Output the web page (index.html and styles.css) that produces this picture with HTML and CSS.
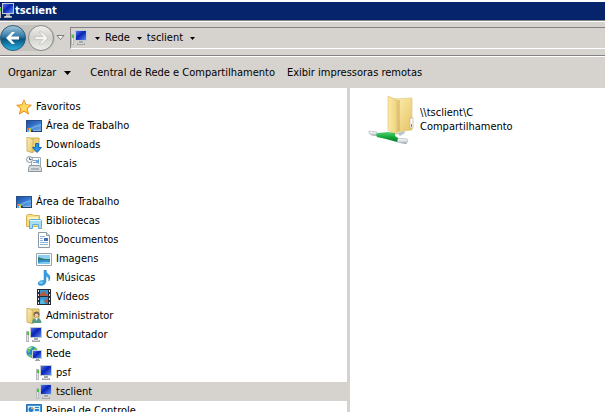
FILE: index.html
```html
<!DOCTYPE html>
<html lang="pt-BR">
<head>
<meta charset="utf-8">
<title>tsclient</title>
<link rel="stylesheet" href="styles.css">
</head>
<body>
<svg class="defs" aria-hidden="true">
  <defs>
    <linearGradient id="screen" x1="0" y1="0" x2="1" y2="1">
      <stop offset="0" stop-color="#4a78f0"/><stop offset=".45" stop-color="#0a22b4"/><stop offset="1" stop-color="#5a8af4"/>
    </linearGradient>
    <linearGradient id="desk" x1="0" y1="0" x2="1" y2="1">
      <stop offset="0" stop-color="#1d4f9f"/><stop offset=".5" stop-color="#3576cc"/><stop offset="1" stop-color="#6aa8ea"/>
    </linearGradient>
    <linearGradient id="gold" x1="0" y1="0" x2="1" y2="1">
      <stop offset="0" stop-color="#fdf0b4"/><stop offset="1" stop-color="#e6c465"/>
    </linearGradient>
    <linearGradient id="fold" x1="0" y1="0" x2="1" y2="0">
      <stop offset="0" stop-color="#fbe9a4"/><stop offset="1" stop-color="#efd27f"/>
    </linearGradient>
    <linearGradient id="back" x1="0" y1="0" x2="0" y2="1">
      <stop offset="0" stop-color="#a9c8dc"/><stop offset=".45" stop-color="#2f78a8"/><stop offset=".55" stop-color="#08547f"/><stop offset="1" stop-color="#2ab4e4"/>
    </linearGradient>
    <linearGradient id="next" x1="0" y1="0" x2="0" y2="1">
      <stop offset="0" stop-color="#f0f0ee"/><stop offset=".5" stop-color="#d2d1cd"/><stop offset="1" stop-color="#efefed"/>
    </linearGradient>
    <linearGradient id="pipe" x1="0" y1="0" x2="0" y2="1">
      <stop offset="0" stop-color="#f6f8f9"/><stop offset=".5" stop-color="#dfe5e9"/><stop offset="1" stop-color="#8b979f"/>
    </linearGradient>
    <linearGradient id="green" x1="0" y1="0" x2="0" y2="1">
      <stop offset="0" stop-color="#58d070"/><stop offset=".5" stop-color="#14a93c"/><stop offset="1" stop-color="#067a22"/>
    </linearGradient>
    <symbol id="pc" viewBox="0 0 16 16">
      <path d="M0 4h3v11H0z" fill="#b6babd"/><path d="M1 5h1v9H1z" fill="#e6e8e8"/><path d="M1 5h2v3H1z" fill="#42cc32"/>
      <path d="M4 0h12v11H4z" fill="#c5c9d0"/><path d="M5 1h10v9H5z" fill="url(#screen)"/>
      <path d="M8 11h4v2h2v2H6v-2h2z" fill="#a3a7ac"/><path d="M7 13h6v1H7z" fill="#d9dcdf"/>
    </symbol>
    <symbol id="desktop" viewBox="0 0 16 16">
      <path d="M0 2h16v12H0z" fill="#2a4f86"/><path d="M1 3h14v9H1z" fill="url(#desk)"/>
      <path d="M1 12Q8 7 15 6v2Q9 9 5 12z" fill="#86baf0" opacity=".6"/><path d="M0 12h16v2H0z" fill="#1c4478"/><path d="M7 12h8v1H7z" fill="#8fb0d8"/>
      <path d="M1 10h2v2H1z" fill="#e8703c"/><path d="M3 10h2v2H3z" fill="#88d050"/><path d="M1 12h2v2H1z" fill="#59b4f4"/><path d="M3 12h2v2H3z" fill="#f6d64a"/>
    </symbol>
    <symbol id="star" viewBox="0 0 16 16">
      <path d="M8 .8l2 5 5.3.4-4.1 3.5 1.3 5.4L8 12.2l-4.6 2.9 1.3-5.4L.7 6.2 6 5.8z" fill="#ffc62e" stroke="#e9962c"/>
      <path d="M8 2l1.500 4 4 .3-3.500 3 1 3L8 11l-3 1.500 1-3L3 7l3.500-.5z" fill="#ffdb66"/>
    </symbol>
    <symbol id="openfolder" viewBox="0 0 16 16">
      <path d="M5 1h8v13H5z" fill="#ecd27c" stroke="#cfae55"/><path d="M1 0l6 2v14l-6-2z" fill="url(#gold)" stroke="#d1b35c"/>
    </symbol>
    <symbol id="downloads" viewBox="0 0 16 16">
      <use href="#openfolder"/><path d="M9.500 6.500h3v4h3L11 15.500 6.500 10.500h3z" fill="#2b96e6" stroke="#136bb6"/>
    </symbol>
    <symbol id="admin" viewBox="0 0 16 16">
      <use href="#openfolder"/><circle cx="10.500" cy="6.500" r="3" fill="#7b624a"/><circle cx="10.500" cy="7.500" r="2" fill="#e8c6a1"/><path d="M6 15q0-5 4.500-5t5 5z" fill="#559a86"/><path d="M9 10h3l-1.500 3z" fill="#e8f0ec"/>
    </symbol>
    <symbol id="places" viewBox="0 0 16 16">
      <path d="M5.500 1.500h9v9h-9z" fill="#f7f9fa" stroke="#a1aab1"/><path d="M7 4h3v1H7zM7 6h3v1H7zM12 3h1v5h-1z" fill="#8ba7bd"/><path d="M10 4h3v3h-3z" fill="#62a7de"/>
      <path d="M3.500 9.500h10l2 3v3h-13v-3z" fill="#d7dcdf" stroke="#8c969d"/><path d="M5 12h8v2H5z" fill="#a9b2b8"/>
      <circle cx="3.500" cy="3.500" r="3" fill="#eef3f5" stroke="#8f9aa3"/><path d="M3.500 1.500v2h2" fill="none" stroke="#4c6a84"/>
    </symbol>
    <symbol id="library" viewBox="0 0 16 16">
      <path d="M.5 2.500l1-1h5l1 1h6v11H.5z" fill="#f4dd88" stroke="#d5b252"/><path d="M2 4h10v2H2z" fill="#fff3bb"/>
      <path d="M3.500 15.500v-8l1-1h10l1 1v8h-3v-4h-6v4z" fill="#a8dcf3" stroke="#5aaedb"/><path d="M4 7h11v1H4z" fill="#e2f6fd"/>
    </symbol>
    <symbol id="doc" viewBox="0 0 16 16">
      <path d="M2.500.5h8l3 3v12h-11z" fill="#fff" stroke="#8b98a8"/><path d="M10.500.5v3h3" fill="#d7e1ec" stroke="#8b98a8"/>
      <path d="M4 4h5v1H4zM4 6h3v1H4zM4 8h3v1H4zM4 10h8v1H4zM4 12h8v1H4z" fill="#8eb2da"/><path d="M8 6h4v3H8z" fill="#3c70be"/>
    </symbol>
    <symbol id="image" viewBox="0 0 16 16">
      <path d="M.5 2.500h15v12H.5z" fill="#fff" stroke="#98a3ab"/><path d="M2 4h12v9H2z" fill="#8cd0f5"/><path d="M2 6l3 1 4 1h5v2H2z" fill="#35766f"/><path d="M2 9h12v4H2z" fill="#2b8fca"/><path d="M2 12q5-2 12-1v2H2z" fill="#80c9e8"/>
    </symbol>
    <symbol id="music" viewBox="0 0 16 16">
      <path d="M8 0h2q0 3 3 5 2 2 0 6 .5-4-3-5v6q-1 3.500-5 3.500-3 0-3-2.500 1-3 6-2.500z" fill="#3a9fe2" stroke="#2280c4" stroke-width=".5"/><ellipse cx="5" cy="12.500" rx="2" ry="1" fill="#8ed0f6"/>
    </symbol>
    <symbol id="video" viewBox="0 0 16 16">
      <path d="M1 0h14v16H1z" fill="#252c34"/><path d="M4 1h8v6H4zM4 8h8v7H4z" fill="#3b93cf"/><path d="M4 5l4-3 4 5H4zM8 12l4-3v6z" fill="#b75a45"/><path d="M4 12l3-2 2 5H4z" fill="#53b9e5"/>
      <path d="M2 1h1v2H2zM2 5h1v2H2zM2 9h1v2H2zM2 13h1v2H2zM13 1h1v2h-1zM13 5h1v2h-1zM13 9h1v2h-1zM13 13h1v2h-1z" fill="#e7eaed"/>
    </symbol>
    <symbol id="net" viewBox="0 0 16 16">
      <circle cx="6" cy="6" r="5.700" fill="#2a85d5"/><path d="M1 4q2-4 6-3.500L6 3 4 4v2L2 7zM7 3l3-1.500L11.500 4H8zM3 8l3 1v3Q3 11 2 9z" fill="#65c652"/><path d="M2 3q2-2 4-2L4 3z" fill="#d2f1e9"/>
      <path d="M6 4h10v9H6z" fill="#c8cdd4"/><path d="M7 5h8v7H7z" fill="url(#screen)"/><path d="M10 13h3v1h1v1H9v-1h1z" fill="#9da3aa"/>
    </symbol>
    <symbol id="panel" viewBox="0 0 16 16">
      <path d="M.5 1.500h15v12H.5z" fill="#429bdf" stroke="#2b6eac"/><path d="M2 3h12v9H2z" fill="#d3edfd"/><circle cx="5" cy="6.500" r="2.500" fill="#267dcb"/><path d="M5 6V4q2 0 2.500 2z" fill="#f5a037"/><path d="M9 4h4v1H9zM9 6h4v2H9zM3 10h10v1H3z" fill="#3883bd"/>
    </symbol>
  </defs>
</svg>
<div class="window">
  <header class="titlebar"><svg class="icon" viewBox="2 0 14 16"><use href="#pc" width="16" height="16"/></svg><h1>tsclient</h1></header>
  <nav class="navbar" aria-label="Navegação">
    <div class="travel">
      <button class="round" aria-label="Voltar"><svg viewBox="0 0 26 26"><circle cx="13" cy="13" r="12.500" fill="url(#back)" stroke="#315d78"/><path d="M6 13l6-6h3l-4 4.500h8v3h-8l4 4.500h-3z" fill="#fff"/></svg></button>
      <button class="round" aria-label="Avançar"><svg viewBox="0 0 26 26"><circle cx="13" cy="13" r="12.500" fill="url(#next)" stroke="#898986"/><path d="M20 13l-6-6h-3l4 4.500H7v3h8l-4 4.500h3z" fill="#f5f5f3" stroke="#b9b8b4" stroke-width=".6"/></svg></button>
    </div>
    <button class="recent" aria-label="Páginas recentes"><svg viewBox="0 0 9 6"><path d="M1 .5h7L4.500 4.500z" fill="#fff" stroke="#77797d"/></svg></button>
    <div class="address">
      <svg class="icon"><use href="#pc"/></svg>
      <button class="crumb arrow" aria-label="Locais"><svg viewBox="0 0 5 3"><path d="M0 0h5L2.500 3z"/></svg></button>
      <button class="crumb">Rede <svg viewBox="0 0 5 3"><path d="M0 0h5L2.500 3z"/></svg></button>
      <button class="crumb">tsclient <svg viewBox="0 0 5 3"><path d="M0 0h5L2.500 3z"/></svg></button>
    </div>
  </nav>
  <div class="toolbar">
    <button class="menu">Organizar <svg viewBox="0 0 7 4"><path d="M0 0h7L3.500 4z"/></svg></button>
    <button>Central de Rede e Compartilhamento</button>
    <button>Exibir impressoras remotas</button>
  </div>
  <main class="content">
    <nav class="tree" aria-label="Pastas">
      <ul>
        <li><a href="#"><svg class="icon"><use href="#star"/></svg>Favoritos</a></li>
        <li class="l1"><a href="#"><svg class="icon"><use href="#desktop"/></svg>Área de Trabalho</a></li>
        <li class="l1"><a href="#"><svg class="icon"><use href="#downloads"/></svg>Downloads</a></li>
        <li class="l1"><a href="#"><svg class="icon"><use href="#places"/></svg>Locais</a></li>
      </ul>
      <ul>
        <li><a href="#"><svg class="icon"><use href="#desktop"/></svg>Área de Trabalho</a></li>
        <li class="l1"><a href="#"><svg class="icon"><use href="#library"/></svg>Bibliotecas</a></li>
        <li class="l2"><a href="#"><svg class="icon"><use href="#doc"/></svg>Documentos</a></li>
        <li class="l2"><a href="#"><svg class="icon"><use href="#image"/></svg>Imagens</a></li>
        <li class="l2"><a href="#"><svg class="icon"><use href="#music"/></svg>Músicas</a></li>
        <li class="l2"><a href="#"><svg class="icon"><use href="#video"/></svg>Vídeos</a></li>
        <li class="l1"><a href="#"><svg class="icon"><use href="#admin"/></svg>Administrator</a></li>
        <li class="l1"><a href="#"><svg class="icon"><use href="#pc"/></svg>Computador</a></li>
        <li class="l1"><a href="#"><svg class="icon"><use href="#net"/></svg>Rede</a></li>
        <li class="l2"><a href="#"><svg class="icon"><use href="#pc"/></svg>psf</a></li>
        <li class="l2 selected"><a href="#" aria-current="true"><svg class="icon"><use href="#pc"/></svg>tsclient</a></li>
        <li class="l1"><a href="#"><svg class="icon"><use href="#panel"/></svg>Painel de Controle</a></li>
      </ul>
    </nav>
    <section class="files">
      <a class="share" href="#">
        <svg viewBox="0 0 48 48">
          <path d="M25 3l19-1v32l-15 2z" fill="url(#gold)" stroke="#ddc27a" stroke-width=".6"/>
          <path d="M28 4l4 0v31l-4 1z" fill="#c9a953" opacity=".5"/>
          <path d="M42 22h3v10h-3z" fill="#fff" stroke="#b8a67a" stroke-width=".6"/><path d="M43 28h1v3h-1z" fill="#3994e2"/>
          <path d="M20 0l9 4v34l-3 0-6-4z" fill="url(#fold)" stroke="#dcc076" stroke-width=".6"/>
          <path d="M29 37l7-2 1 2-5 3z" fill="#b8c5c9"/>
          <path d="M1 35l8 1 1 4-7-1-2-2z" fill="url(#pipe)" stroke="#a8b3ba" stroke-width=".6"/>
          <path d="M29 42l10 1 1 2-2 3-9-2z" fill="url(#pipe)" stroke="#a8b3ba" stroke-width=".6"/>
          <path d="M10 37l10-1 7 1 0 3 3 2-1 4-11-3-9-2-1-3z" fill="url(#green)"/>
        </svg>
        <span>\\tsclient\C<br>Compartilhamento</span>
      </a>
    </section>
  </main>
</div>
</body>
</html>
```
FILE: styles.css
```css
* { box-sizing: border-box; }
body {
  margin: 0;
  color: #000;
  background: #fff;
  font: 11px/14px Tahoma, "DejaVu Sans Condensed", sans-serif;
}
.defs { position: absolute; width: 0; height: 0; }
.window { display: flex; flex-direction: column; height: 100vh; padding-top: 2px; overflow: hidden; }
svg { display: block; flex: none; }
.icon { width: 16px; height: 16px; }
button {
  display: flex;
  align-items: center;
  margin: 0;
  padding: 0;
  border: 0;
  background: none;
  color: inherit;
  font: inherit;
  white-space: nowrap;
}
a { color: inherit; text-decoration: none; }
.titlebar {
  display: flex;
  flex: none;
  gap: 1px;
  align-items: center;
  height: 18px;
  background: #06246b;
  color: #fff;
}
.titlebar .icon { width: 14px; }
.titlebar h1 { margin: 0; font-size: 11px; line-height: 14px; }
.navbar, .toolbar { flex: none; background: #d6d3ce; }
.navbar {
  display: flex;
  align-items: center;
  height: 36px;
  border-top: 1px solid #848284;
  border-bottom: 1px solid #848284;
  box-shadow: inset 0 1px #fff;
}
.travel { display: flex; gap: 2px; padding-right: 1px; border-radius: 14px; background: #c4c3c0; }
.round svg { width: 26px; height: 26px; }
.recent { padding: 0 5px 0 1px; }
.recent svg { width: 9px; height: 6px; }
.address {
  display: flex;
  flex: 1;
  align-items: center;
  height: 22px;
  padding-right: 8px;
  border-top: 1px solid #848284;
  border-bottom: 1px solid #fff;
  border-left: 1px solid #848284;
}
.crumb { gap: 7px; margin-left: 5px; }
.crumb.arrow { margin-left: 8px; }
.crumb svg { width: 5px; height: 3px; }
.toolbar {
  display: flex;
  gap: 12px;
  height: 32px;
  padding: 0 8px;
  border-top: 1px solid #fff;
}
.menu { padding-right: 7px; }
.menu svg { width: 7px; height: 4px; margin-left: 8px; }
.content { display: flex; flex: 1; min-height: 0; }
.tree { flex: 0 1 350px; padding-top: 9px; overflow: hidden; border-right: 3px solid #d6d3ce; }
.tree ul { margin: 0 0 19px; padding: 0; list-style: none; }
.tree a { display: flex; gap: 4px; align-items: center; height: 19px; padding: 1px 0 0 16px; }
.tree .l1 a { padding-left: 26px; }
.tree .l2 a { padding-left: 36px; }
.selected { background: #d6d3ce; }
.files { flex: 1; padding: 8px 18px; }
.share { display: flex; gap: 4px; align-items: center; }
.share svg { width: 48px; height: 48px; }
```
